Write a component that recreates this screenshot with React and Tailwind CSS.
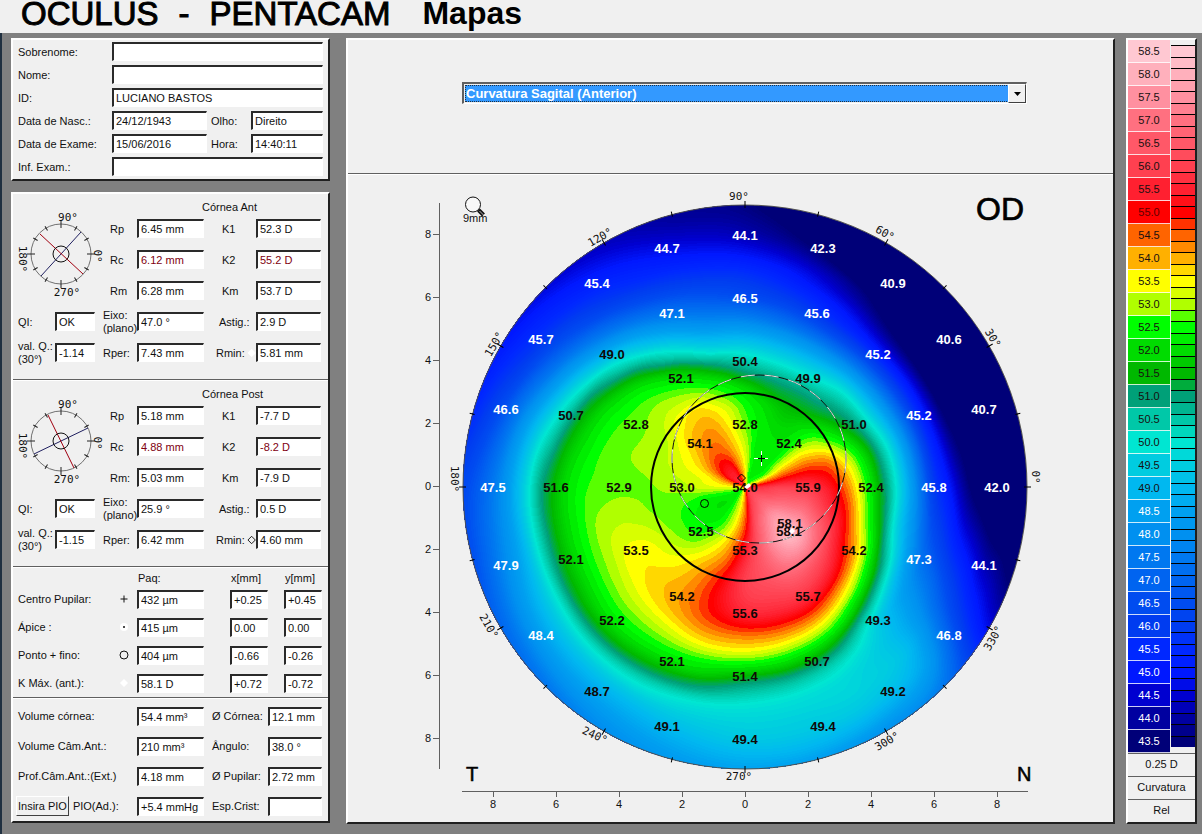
import React, { useMemo } from 'react';

/* ---------- Colour scale ---------- */

const STOPS = [
  [58.5, 'ffc8d2'], [58, 'ffb0bc'], [57.5, 'ff90a0'], [57, 'ff7080'], [56.5, 'ff5868'],
  [56, 'ff4050'], [55.5, 'ff2030'], [55, 'ff0000'], [54.5, 'ff6400'], [54, 'ffb000'],
  [53.5, 'ffff00'], [53, 'b0ff00'], [52.5, '00ff00'], [52, '00dc00'], [51.5, '00b800'],
  [51, '00a078'], [50.5, '00c8a8'], [50, '00e6d2'], [49.5, '00cce0'], [49, '00b8f0'],
  [48.5, '00a0f0'], [48, '0090f0'], [47.5, '0078f0'], [47, '0064f0'], [46.5, '004cf0'],
  [46, '003cf0'], [45.5, '0028ff'], [45, '0018ff'], [44.5, '0000d0'], [44, '0000a0'],
  [43.5, '000078'],
];

const rgb = (hex) => [0, 2, 4].map((i) => parseInt(hex.slice(i, i + 2), 16));

// Bands from the highest value to the lowest; `split` says how many lie between two stops.
function makeBands(split) {
  const bands = [];
  STOPS.forEach(([value, hex], i) => {
    const next = STOPS[i + 1];
    if (!next) {
      bands.push({ value, color: `#${hex}`, size: 0.25 });
      return;
    }
    const n = split(value);
    const a = rgb(hex);
    const b = rgb(next[1]);
    for (let k = 0; k < n; k++) {
      const mix = a.map((c, m) => Math.round(c + ((b[m] - c) * k) / n));
      bands.push({ value: value - (0.5 * k) / n, color: `rgb(${mix.join(',')})`, size: 0.5 / n });
    }
  });
  return bands;
}

const BANDS = makeBands(() => 2);
const MAP_BANDS = makeBands((v) => (v > 55.2 || v < 52.2 ? 6 : 2));

/* ---------- Curvature samples: one ray every 15 degrees, [radius, dioptres] ---------- */

const RAYS = [
  [[5, 55.4], [10, 55.6], [33, 56], [63, 55.9], [83, 55.4], [94, 54.9], [103, 54.3], [112, 53.5], [120, 52.7], [126, 52.2], [132, 51.6], [141, 51], [151, 50], [161, 49], [172, 47.8], [189, 45.9], [205, 45], [218, 44], [226, 43.4], [252, 42], [282, 41]],
  [[5, 54.3], [20, 54.5], [40, 54.8], [63, 54.9], [85, 54.6], [95, 54], [102, 53.5], [110, 53], [117, 52.4], [125, 51.8], [131, 51.4], [137, 50.9], [143, 50.4], [150, 49.8], [158, 49], [167, 48], [177, 46.9], [189, 45.5], [200, 44.7], [212, 43.6], [225, 42.9], [252, 40.9], [282, 40]],
  [[5, 53], [20, 52.7], [40, 53.4], [63, 53.6], [75, 53.4], [85, 53.1], [95, 52.6], [105, 52.1], [115, 51.5], [126, 51], [132, 50.6], [139, 50], [147, 49.4], [155, 48.7], [165, 47.7], [176, 46.6], [189, 45.3], [198, 44.6], [208, 43.6], [225, 42], [252, 40.6], [282, 40]],
  [[5, 52.6], [20, 52.3], [63, 52.3], [80, 52.2], [90, 51.9], [100, 51.5], [110, 51.1], [118, 50.9], [126, 50.5], [136, 50], [145, 49.3], [155, 48.4], [165, 47.4], [176, 46.4], [189, 45.2], [200, 44.4], [210, 43.6], [252, 41], [282, 40]],
  [[5, 52.4], [20, 52.2], [40, 52.2], [63, 52.1], [85, 51.7], [100, 51.3], [110, 51], [118, 50.6], [126, 50.1], [140, 49.3], [155, 48.2], [170, 46.9], [189, 45.5], [205, 44.8], [220, 44], [230, 43.6], [252, 42], [282, 40.6]],
  [[5, 52.5], [20, 52.5], [40, 52.3], [63, 52.3], [85, 52], [100, 51.4], [110, 51], [118, 50.6], [126, 50.1], [140, 49.3], [155, 48.3], [170, 47.2], [189, 46.1], [210, 45.2], [225, 44.7], [240, 44], [252, 43.4], [282, 42.5]],
  [[5, 54], [20, 53.5], [40, 53.2], [63, 52.8], [80, 52.6], [95, 52.2], [107, 51.5], [115, 51], [126, 50.4], [135, 49.9], [150, 48.9], [165, 47.9], [189, 46.5], [210, 45.8], [230, 45], [252, 44.2], [270, 43.8], [282, 43.6]],
  [[5, 54.7], [10, 54.6], [20, 54.3], [40, 53.9], [63, 53.6], [80, 53.4], [95, 52.8], [103, 52.5], [115, 51.8], [122, 51.3], [130, 50.8], [138, 50], [150, 49.2], [165, 48.2], [189, 47], [210, 46.1], [230, 45.3], [252, 44.6], [270, 44.1], [282, 43.9]],
  [[5, 55.3], [20, 55.2], [30, 54.9], [40, 54.5], [63, 54.2], [75, 54], [85, 53.8], [95, 53.5], [105, 53], [115, 52.6], [126, 52.1], [138, 51.4], [148, 50.5], [158, 49.9], [170, 49], [189, 47.8], [210, 46.6], [230, 45.7], [252, 45.1], [270, 44.6], [282, 44.3]],
  [[5, 55.7], [20, 55.4], [30, 55.1], [40, 54.7], [50, 54.4], [63, 54.1], [75, 53.9], [85, 53.6], [95, 53.5], [103, 53.2], [115, 53], [126, 52.7], [140, 52.3], [155, 51.5], [165, 50.8], [173, 50.2], [180, 49.8], [189, 49], [205, 47.8], [225, 46.6], [252, 45.5], [270, 45], [282, 44.6]],
  [[5, 55.4], [20, 55.2], [30, 54.7], [40, 54.3], [50, 53.9], [63, 53.6], [75, 53.4], [90, 53.1], [103, 52.95], [126, 52.8], [145, 52.5], [160, 52], [172, 51.4], [180, 51], [189, 50.2], [198, 49.6], [210, 48.6], [225, 47.5], [252, 46], [270, 45.4], [282, 45]],
  [[5, 54.4], [20, 54.1], [30, 53.8], [40, 53.5], [63, 53.3], [80, 53.1], [95, 52.95], [126, 52.85], [150, 52.6], [170, 52], [182, 51.5], [189, 51.1], [198, 50.5], [208, 49.9], [220, 49], [235, 47.9], [252, 46.8], [270, 46], [282, 45.5]],
  [[5, 53.5], [20, 53.4], [40, 53.3], [63, 53], [95, 52.85], [126, 52.82], [145, 52.75], [160, 52.6], [175, 52.2], [192, 51.5], [205, 50.9], [215, 50], [225, 49.2], [240, 48.1], [252, 47.5], [262, 47], [282, 46.3]],
  [[5, 52.9], [20, 52.6], [40, 52.4], [55, 52.6], [63, 52.65], [75, 52.75], [95, 52.85], [110, 53], [126, 53.1], [140, 53.05], [155, 52.9], [168, 52.5], [180, 52.1], [195, 51.5], [205, 50.9], [215, 50.1], [228, 49], [240, 48.3], [252, 47.8], [270, 47], [282, 46.5]],
  [[5, 52.4], [20, 52.2], [30, 52.1], [40, 52.2], [55, 52.35], [63, 52.45], [75, 52.7], [85, 52.85], [95, 53.1], [110, 53.4], [126, 53.5], [140, 53.4], [150, 53.1], [163, 52.8], [175, 52.4], [190, 51.8], [200, 51.4], [208, 50.9], [218, 50], [230, 49.3], [252, 48.3], [270, 47.5], [282, 47]],
  [[5, 52.4], [20, 52.15], [40, 52.2], [50, 52.35], [63, 52.55], [75, 52.8], [85, 53.1], [95, 53.35], [105, 53.5], [115, 53.65], [126, 53.75], [140, 53.65], [150, 53.4], [160, 53.1], [170, 52.8], [182, 52.4], [192, 52], [205, 51.3], [212, 50.8], [222, 50], [235, 49.3], [252, 48.6], [282, 47.4]],
  [[5, 52.8], [20, 52.6], [40, 52.6], [50, 52.8], [63, 53.2], [75, 53.5], [85, 53.8], [95, 54], [110, 54.15], [126, 54.2], [135, 54.1], [145, 53.9], [155, 53.5], [165, 53.1], [175, 52.7], [185, 52.3], [197, 51.7], [208, 51.1], [218, 50.3], [228, 49.8], [240, 49.2], [252, 48.8], [282, 47.9]],
  [[5, 53.4], [20, 53.3], [40, 53.5], [50, 53.8], [63, 54.1], [75, 54.4], [85, 54.7], [95, 54.95], [110, 55.1], [126, 55], [135, 54.8], [145, 54.4], [155, 53.9], [163, 53.5], [172, 52.9], [182, 52.3], [192, 51.9], [200, 51.3], [208, 50.9], [218, 50.1], [230, 49.7], [252, 49.1], [282, 48.3]],
  [[5, 54.1], [20, 54.3], [40, 54.7], [50, 55], [63, 55.4], [80, 55.8], [95, 56], [110, 55.9], [126, 55.6], [135, 55.2], [140, 55], [148, 54.4], [158, 53.8], [165, 53.4], [172, 52.8], [182, 52], [189, 51.5], [198, 50.9], [208, 50.4], [216, 50], [230, 49.7], [252, 49.4], [270, 48.9], [282, 48.5]],
  [[5, 55.3], [20, 55.7], [40, 56.3], [63, 56.7], [80, 56.6], [95, 56.4], [110, 56.1], [126, 55.7], [135, 55.3], [142, 54.9], [150, 54.3], [157, 53.8], [165, 53.2], [172, 52.6], [180, 52], [187, 51.5], [195, 50.9], [203, 50.4], [215, 49.9], [235, 49.6], [252, 49.4], [270, 48.9], [282, 48.4]],
  [[5, 55.8], [20, 56.3], [40, 57.2], [63, 57.7], [80, 57.4], [95, 56.9], [110, 56.3], [126, 55.7], [135, 55.2], [141, 54.8], [148, 54.2], [155, 53.6], [162, 53], [170, 52.3], [178, 51.6], [185, 51.1], [192, 50.6], [200, 50.1], [215, 49.7], [235, 49.6], [252, 49.3], [270, 48.6], [282, 48]],
  [[5, 56], [20, 56.6], [40, 57.6], [63, 58.3], [75, 57.9], [90, 57.1], [105, 56.2], [118, 55.6], [125, 55.2], [130, 54.9], [137, 54.2], [143, 53.6], [150, 53], [157, 52.2], [165, 51.5], [172, 50.8], [180, 50], [189, 49.4], [210, 49.1], [230, 49.1], [252, 48.6], [270, 47.9], [282, 47.4]],
  [[5, 56], [20, 56.5], [40, 57.2], [63, 57.5], [80, 57], [95, 56.1], [107, 55.4], [115, 54.9], [121, 54.5], [126, 54.1], [131, 53.6], [136, 53.1], [143, 52.3], [150, 51.6], [157, 51], [165, 50.1], [175, 49], [189, 48.1], [210, 47.5], [230, 46.7], [252, 45.8], [270, 45.1], [282, 44.7]],
  [[5, 55.8], [20, 56.1], [40, 56.6], [63, 56.7], [80, 56], [92, 55.5], [102, 55.1], [107, 54.7], [112, 54.2], [118, 53.6], [123, 53], [130, 52.3], [137, 51.7], [145, 51], [153, 50], [162, 49.1], [175, 48], [189, 46.8], [205, 46], [220, 45.2], [235, 44.6], [252, 43.8], [265, 43.5], [282, 42.8]],
];

const CX = 745;
const CY = 487;
const RADIUS = 282;

const RAY_TABLE = RAYS.map((ray) => {
  const out = [];
  for (let r = 0; r <= 300; r++) {
    if (r <= ray[0][0]) {
      out.push(ray[0][1]);
      continue;
    }
    let i = 1;
    while (i < ray.length - 1 && ray[i][0] < r) i++;
    const [r0, v0] = ray[i - 1];
    const [r1, v1] = ray[i];
    out.push(v0 + ((v1 - v0) * (Math.min(r, r1) - r0)) / (r1 - r0));
  }
  // Soften the joints of the linear pieces.
  return out.map((_, r) => {
    let sum = 0;
    let n = 0;
    for (let k = -5; k <= 5; k++) {
      if (r + k >= 0 && r + k <= 300) {
        sum += out[r + k];
        n++;
      }
    }
    return sum / n;
  });
});

function curvatureAt(x, y) {
  const dx = x - CX;
  const dy = CY - y;
  const r = Math.min(299, Math.hypot(dx, dy));
  let a = Math.atan2(dy, dx) / (Math.PI / 12);
  if (a < 0) a += 24;
  const i = Math.floor(a);
  const t = a - i;
  const ri = Math.floor(r);
  const rt = r - ri;
  const p = [-1, 0, 1, 2].map((k) => {
    const ray = RAY_TABLE[(i + k + 48) % 24];
    return ray[ri] * (1 - rt) + ray[ri + 1] * rt;
  });
  return (
    0.5 *
    (2 * p[1] +
      (p[2] - p[0]) * t +
      (2 * p[0] - 5 * p[1] + 4 * p[2] - p[3]) * t * t +
      (3 * p[1] - p[0] - 3 * p[2] + p[3]) * t * t * t)
  );
}

// Filled contours: for every band, the area whose value reaches the band's lower edge.
function buildContours() {
  const step = 3;
  const n = Math.ceil((RADIUS * 2) / step);
  const x0 = CX - RADIUS;
  const y0 = CY - RADIUS;
  const grid = [];
  for (let j = 0; j <= n; j++) {
    const row = [];
    for (let i = 0; i <= n; i++) row.push(curvatureAt(x0 + i * step, y0 + j * step));
    grid.push(row);
  }
  return MAP_BANDS.slice(0, -1)
    .reverse()
    .map(({ value, color, size }) => {
      const level = value - size / 2;
      const parts = [];
      for (let j = 0; j < n; j++) {
        let start = -1;
        for (let i = 0; i <= n; i++) {
          let kind = 0;
          let v = null;
          if (i < n) {
            v = [grid[j][i], grid[j][i + 1], grid[j + 1][i + 1], grid[j + 1][i]];
            const inside = v.filter((q) => q >= level).length;
            kind = inside === 4 ? 2 : inside ? 1 : 0;
          }
          if (kind === 2) {
            if (start < 0) start = i;
            continue;
          }
          const X = x0 + i * step;
          const Y = y0 + j * step;
          if (start >= 0) {
            parts.push(`M${x0 + start * step} ${Y}H${X}V${Y + step}H${x0 + start * step}Z`);
            start = -1;
          }
          if (kind === 1) {
            const c = [[X, Y], [X + step, Y], [X + step, Y + step], [X, Y + step]];
            const pts = [];
            for (let k = 0; k < 4; k++) {
              const m = (k + 1) % 4;
              if (v[k] >= level) pts.push(c[k]);
              if (v[k] >= level !== v[m] >= level) {
                const f = (level - v[k]) / (v[m] - v[k]);
                pts.push([c[k][0] + (c[m][0] - c[k][0]) * f, c[k][1] + (c[m][1] - c[k][1]) * f]);
              }
            }
            parts.push(`M${pts.map((q) => `${q[0].toFixed(1)} ${q[1].toFixed(1)}`).join('L')}Z`);
          }
        }
      }
      return { value, color, d: parts.join('') };
    });
}

/* ---------- Map annotations: [text, x, y, white] ---------- */

const READINGS = [
  ['44.1', 745, 235, 1], ['44.7', 667, 248, 1], ['42.3', 823, 248, 1], ['45.4', 597, 283, 1],
  ['40.9', 893, 283, 1], ['46.5', 745, 298, 1], ['47.1', 672, 313, 1], ['45.6', 817, 313, 1],
  ['45.7', 541, 339, 1], ['40.6', 949, 339, 1], ['49.0', 612, 354, 0], ['45.2', 878, 354, 1],
  ['50.4', 745, 361, 0], ['52.1', 681, 378, 0], ['49.9', 808, 378, 0], ['46.6', 506, 409, 1],
  ['40.7', 984, 409, 1], ['50.7', 571, 415, 0], ['45.2', 919, 415, 1], ['52.8', 636, 424, 0],
  ['52.8', 745, 424, 0], ['51.0', 854, 424, 0], ['54.1', 700, 443, 0], ['52.4', 789, 443, 0],
  ['47.5', 493, 487, 1], ['51.6', 556, 487, 0], ['52.9', 619, 487, 0], ['53.0', 682, 487, 0],
  ['54.0', 745, 487, 0], ['55.9', 808, 487, 0], ['52.4', 871, 487, 0], ['45.8', 934, 487, 1],
  ['42.0', 997, 487, 1], ['58.1', 790, 523, 0], ['58.1', 789, 531, 0], ['52.5', 701, 531, 0],
  ['53.5', 636, 550, 0], ['55.3', 745, 550, 0], ['54.2', 854, 550, 0], ['52.1', 571, 559, 0],
  ['47.3', 919, 559, 1], ['47.9', 506, 565, 1], ['44.1', 984, 565, 1], ['54.2', 682, 596, 0],
  ['55.7', 808, 596, 0], ['55.6', 745, 613, 0], ['52.2', 612, 620, 0], ['49.3', 878, 620, 0],
  ['48.4', 541, 635, 1], ['46.8', 949, 635, 1], ['52.1', 672, 661, 0], ['50.7', 817, 661, 0],
  ['51.4', 745, 676, 0], ['48.7', 597, 691, 0], ['49.2', 893, 691, 0], ['49.1', 667, 726, 0],
  ['49.4', 823, 726, 0], ['49.4', 745, 739, 0],
];

const MERIDIANS = [
  ['90°', 739, 196, 0], ['60°', 885, 233, 30], ['30°', 993, 338, 60], ['0°', 1036, 477, 90],
  ['330°', 993, 638, -60], ['300°', 887, 741, -30], ['270°', 739, 776, 0], ['240°', 595, 735, 25],
  ['210°', 489, 626, 60], ['180°', 455, 479, 90], ['150°', 494, 344, -60], ['120°', 600, 237, -30],
];

const AXIS = [8, 6, 4, 2, 0, 2, 4, 6, 8];
const SANS = '"Liberation Sans", Arial, sans-serif';
const MONO = '"DejaVu Sans Mono", monospace';

function CurvatureMap() {
  const contours = useMemo(buildContours, []);
  return (
    <svg viewBox="348 175 765 647" className="block h-auto w-full" role="img" aria-label="Curvatura Sagital (Anterior)">
      <defs>
        <clipPath id="cornea">
          <circle cx={CX} cy={CY} r={RADIUS} />
        </clipPath>
      </defs>
      <g clipPath="url(#cornea)" shapeRendering="crispEdges">
        <circle cx={CX} cy={CY} r={RADIUS} fill={BANDS[BANDS.length - 1].color} />
        {contours.map((c) => (
          <path key={c.value} d={c.d} fill={c.color} />
        ))}
      </g>
      <circle cx={CX} cy={CY} r={RADIUS} fill="none" stroke="#505050" />
      {Array.from({ length: 24 }, (_, i) => (
        <line
          key={i}
          x1={CX + RADIUS - (i % 2 ? 2 : 3)}
          x2={CX + RADIUS + (i % 2 ? 3 : 4)}
          y1={CY}
          y2={CY}
          stroke="#000"
          transform={`rotate(${i * 15} ${CX} ${CY})`}
        />
      ))}

      {/* scales in millimetres */}
      <g stroke="#606060" shapeRendering="crispEdges">
        <path d="M439.5 203V769M462 791.5H1028" fill="none" />
        {AXIS.map((_, i) => (
          <path key={i} d={`M433 ${235 + i * 63 - 0.5}h7M${493.5 + i * 63} 791v6`} />
        ))}
      </g>
      <g fontFamily={SANS} fontSize="11" fill="#111">
        {AXIS.map((n, i) => (
          <React.Fragment key={i}>
            <text x="431" y={239 + i * 63 - 1} textAnchor="end">{n}</text>
            <text x={493 + i * 63} y="808" textAnchor="middle">{n}</text>
          </React.Fragment>
        ))}
        <text x="463" y="222">9mm</text>
      </g>
      <g fontFamily={MONO} fontSize="11" fill="#111" textAnchor="middle">
        {MERIDIANS.map(([t, x, y, a]) => (
          <text key={t} transform={`translate(${x} ${y}) rotate(${a})`} y="4">{t}</text>
        ))}
      </g>

      {/* rings */}
      <circle cx={CX} cy={CY} r="94" fill="none" stroke="#000" strokeWidth="2" />
      <ellipse cx="759" cy="459" rx="87" ry="84" fill="none" stroke="#111" />
      <ellipse cx="759" cy="459" rx="87" ry="84" fill="none" stroke="#e8e8e8" strokeDasharray="14 10" />

      <g fontFamily={SANS} fontSize="13" fontWeight="700" textAnchor="middle">
        {READINGS.map(([t, x, y, white]) => (
          <text key={`${x}-${y}`} x={x} y={y + 5} fill={white ? '#fff' : '#100806'}>{t}</text>
        ))}
      </g>

      {/* landmarks */}
      <path d="M754 458.500H768M761.500 451V466" stroke="#fff" />
      <path d="M758 458.500H765M761.500 455V462" stroke="#000" />
      <circle cx="704.500" cy="503.500" r="4" fill="none" stroke="#000" />
      <path d="M741.500 474l4 4-4 4-4-4z" fill="none" stroke="#000" />
      <path d="M792 528l3 3-3 3-3-3z" fill="#fff" />
      <path d="M744 487l5-4 2 3-4 3z" fill="#fff" />

      <g fontFamily={SANS} fill="#000" stroke="#000">
        <text x="976" y="220" fontSize="32" strokeWidth="0.700">OD</text>
        <text x="466" y="781" fontSize="20" strokeWidth="0.500">T</text>
        <text x="1017" y="781" fontSize="20" strokeWidth="0.500">N</text>
      </g>

      {/* magnifier */}
      <circle cx="473" cy="204.500" r="7.500" fill="#f8f8f8" stroke="#111" />
      <path d="M478.500 210l5 5" stroke="#111" strokeWidth="4" />
      <path d="M479.500 211l4 4" stroke="#bbb" />
    </svg>
  );
}

/* ---------- Form pieces ---------- */

const PANEL = 'border-2 border-t-white border-l-white border-r-[#202020] border-b-[#202020] bg-[#f0f0f0]';
const RULE = 'border-0 border-t border-[#606060] border-b border-b-white h-[2px] w-full';

function Field({ id, value = '', className = 'w-full', red = false, label }) {
  return (
    <input
      id={id}
      aria-label={label}
      defaultValue={value}
      className={`h-[19px] min-w-0 rounded-none border-t-2 border-r border-b border-l-2 border-t-[#2a2a2a] border-r-white border-b-white border-l-[#2a2a2a] bg-white pl-[2px] outline-none ${red ? 'text-[#800010]' : 'text-[#111111]'} ${className}`}
    />
  );
}

function PatientRow({ id, label, value, extra }) {
  return (
    <div className="flex h-[23px] items-center">
      <label htmlFor={id} className="w-[94px] shrink-0">{label}</label>
      {extra ? (
        <>
          <Field id={id} value={value} className="w-[95px]" />
          <label htmlFor={extra.id} className="w-11 shrink-0 pl-1">{extra.label}</label>
          <Field id={extra.id} value={extra.value} className="flex-1" />
        </>
      ) : (
        <Field id={id} value={value} className="flex-1" />
      )}
    </div>
  );
}

function Dial({ red, blue }) {
  return (
    <svg viewBox="0 0 77 93" width="77" height="93" className="overflow-visible" role="img" aria-label="Eixos">
      <circle cx="43" cy="41" r="30" fill="none" stroke="#707070" />
      {Array.from({ length: 12 }, (_, i) => (
        <line
          key={i}
          x1={i % 3 ? 70 : 69}
          x2={i % 3 ? 75 : 77}
          y1="41"
          y2="41"
          stroke="#222"
          transform={`rotate(${i * 30} 43 41)`}
        />
      ))}
      <path d={blue} stroke="#202060" />
      <path d={red} stroke="#a00010" />
      <circle cx="43" cy="41" r="8" fill="none" stroke="#111" />
      <g fontFamily={MONO} fontSize="11" fill="#111" textAnchor="middle">
        <text x="50" y="8">90°</text>
        <text x="49" y="83">270°</text>
        <text transform="translate(5 46) rotate(90)" y="4">180°</text>
        <text transform="translate(80 43) rotate(90)" y="4">0°</text>
      </g>
    </svg>
  );
}

function Cornea({ id, title, dial, rm, v, marker }) {
  const rows = [
    ['Rp', v.rp, 'K1', v.k1, false],
    ['Rc', v.rc, 'K2', v.k2, true],
    [rm, v.rm, 'Km', v.km, false],
  ];
  return (
    <section className="pb-[11px] pl-[5px]">
      <h2 className="flex h-[19px] items-end pl-[184px] leading-3">{title}</h2>
      <div className="grid auto-rows-[31px] grid-cols-[37px_40px_42px_67px_52px_65px] items-center">
        <div className="col-span-2 row-span-3">{dial}</div>
        {rows.map(([a, av, b, bv, red]) => (
          <React.Fragment key={a}>
            <label htmlFor={`${id}-${a}`} className="pl-[15px]">{a}</label>
            <Field id={`${id}-${a}`} value={av} red={red} />
            <label htmlFor={`${id}-${b}`} className="pl-[18px]">{b}</label>
            <Field id={`${id}-${b}`} value={bv} red={red} />
          </React.Fragment>
        ))}
        <label htmlFor={`${id}-qi`}>QI:</label>
        <Field id={`${id}-qi`} value="OK" />
        <label htmlFor={`${id}-eixo`} className="pl-2 leading-[13px]">Eixo:<br />(plano)</label>
        <Field id={`${id}-eixo`} value={v.eixo} />
        <label htmlFor={`${id}-astig`} className="pl-[15px]">Astig.:</label>
        <Field id={`${id}-astig`} value={v.astig} />
        <label htmlFor={`${id}-q`} className="leading-[13px] whitespace-nowrap">val. Q.:<br />(30°)</label>
        <Field id={`${id}-q`} value={v.q} />
        <label htmlFor={`${id}-rper`} className="pl-2">Rper:</label>
        <Field id={`${id}-rper`} value={v.rper} />
        <label htmlFor={`${id}-rmin`} className="flex items-center gap-0.5 pl-3">
          Rmin:
          <svg width="10" height="10" viewBox="0 0 10 10">
            <path d="M5 1l4 4-4 4-4-4z" fill={marker ? 'none' : '#fff'} stroke={marker ? '#111' : '#fff'} />
          </svg>
        </label>
        <Field id={`${id}-rmin`} value={v.rmin} />
      </div>
    </section>
  );
}

const POINTS = [
  ['Centro Pupilar:', '432 µm', '+0.25', '+0.45', <path d="M5 1.500V8.500M1.500 5H8.500" stroke="#111" />],
  ['Ápice :', '415 µm', '0.00', '0.00', <g><circle cx="5" cy="5" r="4" fill="#fff" /><circle cx="5" cy="5" r="1" fill="#111" /></g>],
  ['Ponto + fino:', '404 µm', '-0.66', '-0.26', <circle cx="5" cy="5" r="4" fill="none" stroke="#111" />],
  ['K Máx. (ant.):', '58.1 D', '+0.72', '-0.72', <path d="M5 1l4 4-4 4-4-4z" fill="#fff" />],
];

const VOLUMES = [
  ['Volume córnea:', '54.4 mm³', 'Ø Córnea:', '12.1 mm'],
  ['Volume Câm.Ant.:', '210 mm³', 'Ângulo:', '38.0 °'],
  ['Prof.Câm.Ant.:(Ext.)', '4.18 mm', 'Ø Pupilar:', '2.72 mm'],
  ['PIO(Ad.):', '+5.4 mmHg', 'Esp.Crist:', ''],
];

function ColorBar() {
  return (
    <aside className={`ml-[11px] flex w-[71px] shrink-0 flex-col self-start ${PANEL}`}>
      <div className="flex">
        <ul className="w-[42px]">
          {STOPS.map(([value, hex]) => (
            <li
              key={value}
              style={{ backgroundColor: `#${hex}` }}
              className={`flex h-[23px] items-center justify-center border-b border-white/80 ${value <= 48.5 ? 'text-white' : value === 55 ? 'text-[#600000]' : 'text-[#181010]'}`}
            >
              {value.toFixed(1)}
            </li>
          ))}
        </ul>
        <div className="flex flex-1 flex-col pt-[5px] pb-[6px] pl-px">
          {BANDS.map(({ value, color }) => (
            <div key={value} style={{ backgroundColor: color }} className="flex-1 border-t border-black" />
          ))}
        </div>
      </div>
      {['0.25 D', 'Curvatura', 'Rel'].map((t) => (
        <button key={t} type="button" className="h-[23px] border-t border-[#606060] pb-0.5 text-center">{t}</button>
      ))}
    </aside>
  );
}

export default function App() {
  return (
    <div className="flex min-h-screen flex-col bg-[#808080] font-['Liberation_Sans',Arial,sans-serif] text-[11px] leading-[14px] text-[#111111]">
      <header className="h-[33px] bg-[#f0f0f0]">
        <h1 className="flex gap-5 pl-[21px] text-[33px] leading-[27px] font-normal text-black [-webkit-text-stroke:1px_#000]">
          <span>OCULUS</span>
          <span>-</span>
          <span>PENTACAM</span>
          <span className="pl-3 text-[32px] font-bold [-webkit-text-stroke:0]">Mapas</span>
        </h1>
      </header>

      <main className="flex flex-1 border-l-2 border-[#203040] pt-[5px] pr-[5px] pb-[9px] pl-[9px]">
        <aside className="mr-4 flex w-[319px] shrink-0 flex-col gap-[11px] self-start">
          <section className={`pr-[5px] pb-px pl-[5px] ${PANEL}`}>
            <PatientRow id="sobrenome" label="Sobrenome:" />
            <PatientRow id="nome" label="Nome:" />
            <PatientRow id="pid" label="ID:" value="LUCIANO BASTOS" />
            <PatientRow id="nasc" label="Data de Nasc.:" value="24/12/1943" extra={{ id: 'olho', label: 'Olho:', value: 'Direito' }} />
            <PatientRow id="exame" label="Data de Exame:" value="15/06/2016" extra={{ id: 'hora', label: 'Hora:', value: '14:40:11' }} />
            <PatientRow id="inf" label="Inf. Exam.:" />
          </section>

          <section className={PANEL}>
            <Cornea
              id="ant"
              title="Córnea Ant"
              rm="Rm"
              dial={<Dial red="M22 21L65 61" blue="M23 63L63 19" />}
              v={{ rp: '6.45 mm', k1: '52.3 D', rc: '6.12 mm', k2: '55.2 D', rm: '6.28 mm', km: '53.7 D', eixo: '47.0 °', astig: '2.9 D', q: '-1.14', rper: '7.43 mm', rmin: '5.81 mm' }}
            />
            <hr className={RULE} />
            <Cornea
              id="post"
              title="Córnea Post"
              rm="Rm:"
              marker
              dial={<Dial red="M30 15L56 68" blue="M16 54L70 28" />}
              v={{ rp: '5.18 mm', k1: '-7.7 D', rc: '4.88 mm', k2: '-8.2 D', rm: '5.03 mm', km: '-7.9 D', eixo: '25.9 °', astig: '0.5 D', q: '-1.15', rper: '6.42 mm', rmin: '4.60 mm' }}
            />
            <hr className={RULE} />

            <section className="pl-[5px]">
              <div className="grid h-[17px] grid-cols-[120px_93px_54px_38px] items-end">
                <span />
                <span>Paq:</span>
                <span>x[mm]</span>
                <span>y[mm]</span>
              </div>
              {POINTS.map(([label, paq, x, y, icon], i) => (
                <div key={label} className="grid h-7 grid-cols-[101px_18px_67px_26px_38px_16px_38px] items-center">
                  <label htmlFor={`pt-${i}`}>{label}</label>
                  <svg width="10" height="10" viewBox="0 0 10 10">{icon}</svg>
                  <Field id={`pt-${i}`} value={paq} />
                  <span />
                  <Field label={`${label} x[mm]`} value={x} />
                  <span />
                  <Field label={`${label} y[mm]`} value={y} />
                </div>
              ))}
            </section>
            <hr className={RULE} />

            <section className="pt-[2px] pl-[5px]">
              {VOLUMES.map(([a, av, b, bv], i) => (
                <div key={a} className="grid h-[30px] grid-cols-[119px_67px_64px_54px] items-center">
                  <div className="flex items-center">
                    {i === 3 && (
                      <button type="button" className="mr-1 -ml-0.5 h-5 border border-t-white border-r-[#404040] border-b-[#404040] border-l-white px-px whitespace-nowrap">
                        Insira PIO
                      </button>
                    )}
                    <label htmlFor={`vol-${i}`}>{a}</label>
                  </div>
                  <Field id={`vol-${i}`} value={av} />
                  <label htmlFor={`dim-${i}`} className="pl-2 whitespace-nowrap">{b}</label>
                  <Field id={`dim-${i}`} value={bv} />
                </div>
              ))}
            </section>
          </section>
        </aside>

        <section className={`min-w-0 flex-1 self-start ${PANEL}`}>
          <div className="h-[133px] pt-[42px] pr-[86px] pl-[114px]">
            <div className="relative flex h-[22px] border-t-2 border-r border-b border-l-2 border-t-[#606060] border-r-white border-b-white border-l-[#606060] bg-[#f0f0f0] p-px">
              <select
                aria-label="Mapa"
                className="h-full w-full appearance-none rounded-none border border-dotted border-[#203040] bg-[#3399ff] text-[13px] leading-4 font-bold text-white outline-none"
              >
                <option>Curvatura Sagital (Anterior)</option>
              </select>
              <span className="pointer-events-none absolute top-0 right-0 flex h-full w-[18px] items-center justify-center border border-t-white border-r-[#404040] border-b-[#404040] border-l-white bg-[#f0f0f0]">
                <svg width="7" height="4" viewBox="0 0 7 4"><path d="M0 0h7L3.500 4z" fill="#000" /></svg>
              </span>
            </div>
          </div>
          <hr className={RULE} />
          <CurvatureMap />
        </section>

        <ColorBar />
      </main>
    </div>
  );
}
